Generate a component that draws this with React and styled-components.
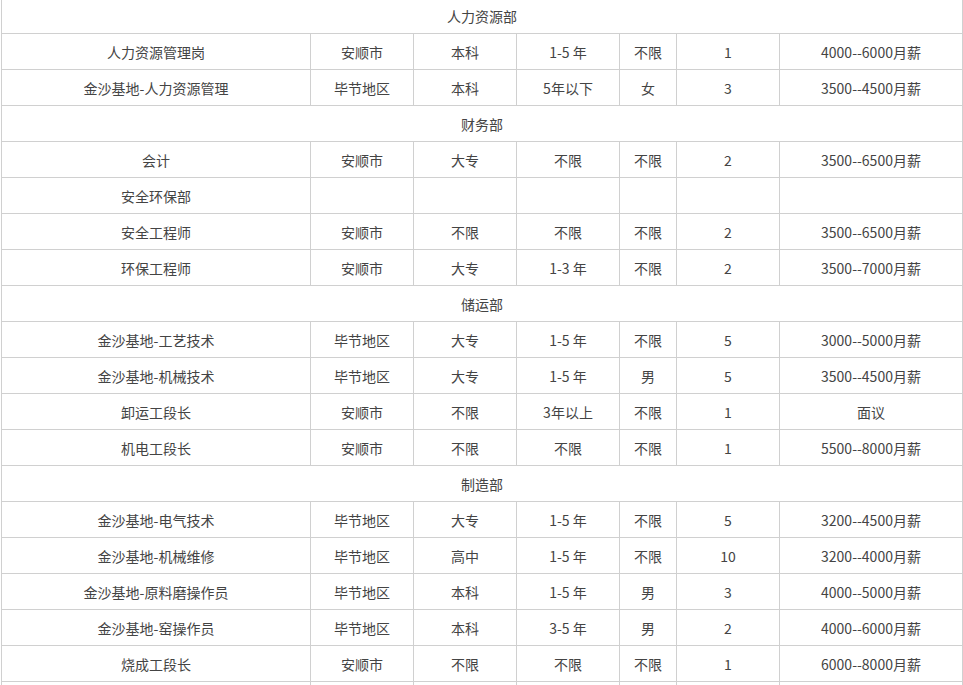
import React from 'react';
import styled, { createGlobalStyle } from 'styled-components';

const GlobalStyle = createGlobalStyle`
  html, body {
    margin: 0;
    padding: 0;
    background: #fff;
    overflow: hidden;
  }
  body {
    font-family: "Noto Sans CJK SC", "Noto Sans", sans-serif;
    color: #444;
  }
`;

const COLUMNS = '309px 103px 103px 103px 57px 103px 183px';

const Table = styled.div`
  width: 961px;
  margin: -3px 0 0 1px;
  border-left: 1px solid #d0d0d0;
  border-top: 1px solid #d0d0d0;
`;

const Row = styled.div`
  display: grid;
  grid-template-columns: ${props => (props.$header ? '1fr' : COLUMNS)};
  height: 36px;
`;

const Cell = styled.div`
  display: flex;
  align-items: center;
  justify-content: center;
  border-right: 1px solid #d0d0d0;
  border-bottom: 1px solid #d0d0d0;
  font-size: 14px;
  line-height: 1;
  white-space: nowrap;
`;

const rows = [
  { dept: '人力资源部' },
  ['人力资源管理岗', '安顺市', '本科', '1-5 年', '不限', '1', '4000--6000月薪'],
  ['金沙基地-人力资源管理', '毕节地区', '本科', '5年以下', '女', '3', '3500--4500月薪'],
  { dept: '财务部' },
  ['会计', '安顺市', '大专', '不限', '不限', '2', '3500--6500月薪'],
  ['安全环保部', '', '', '', '', '', ''],
  ['安全工程师', '安顺市', '不限', '不限', '不限', '2', '3500--6500月薪'],
  ['环保工程师', '安顺市', '大专', '1-3 年', '不限', '2', '3500--7000月薪'],
  { dept: '储运部' },
  ['金沙基地-工艺技术', '毕节地区', '大专', '1-5 年', '不限', '5', '3000--5000月薪'],
  ['金沙基地-机械技术', '毕节地区', '大专', '1-5 年', '男', '5', '3500--4500月薪'],
  ['卸运工段长', '安顺市', '不限', '3年以上', '不限', '1', '面议'],
  ['机电工段长', '安顺市', '不限', '不限', '不限', '1', '5500--8000月薪'],
  { dept: '制造部' },
  ['金沙基地-电气技术', '毕节地区', '大专', '1-5 年', '不限', '5', '3200--4500月薪'],
  ['金沙基地-机械维修', '毕节地区', '高中', '1-5 年', '不限', '10', '3200--4000月薪'],
  ['金沙基地-原料磨操作员', '毕节地区', '本科', '1-5 年', '男', '3', '4000--5000月薪'],
  ['金沙基地-窑操作员', '毕节地区', '本科', '3-5 年', '男', '2', '4000--6000月薪'],
  ['烧成工段长', '安顺市', '不限', '不限', '不限', '1', '6000--8000月薪'],
  ['', '', '', '', '', '', ''],
];

const App = () => (
  <>
    <GlobalStyle />
    <Table>
      {rows.map((row, i) =>
        row.dept ? (
          <Row key={i} $header>
            <Cell>{row.dept}</Cell>
          </Row>
        ) : (
          <Row key={i}>
            {row.map((text, j) => (
              <Cell key={j}>{text}</Cell>
            ))}
          </Row>
        )
      )}
    </Table>
  </>
);

export default App;
